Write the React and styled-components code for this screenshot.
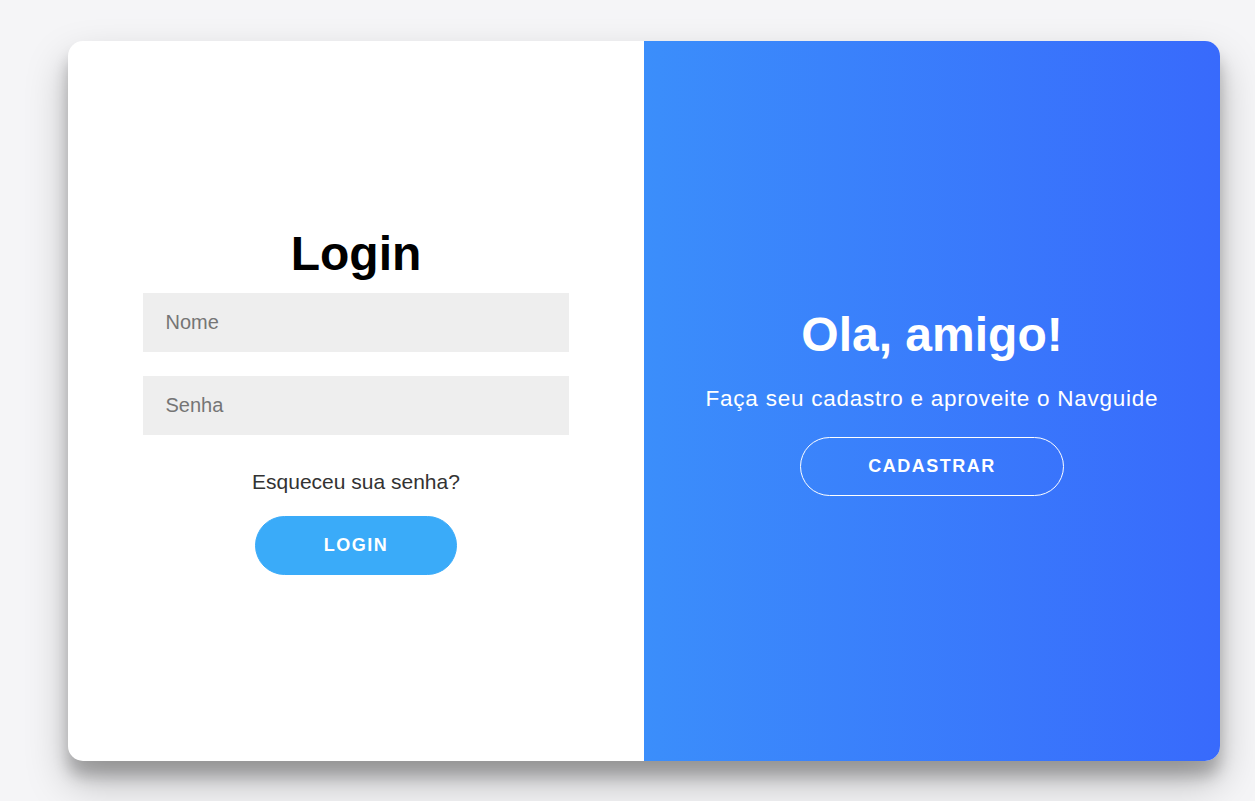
import React from 'react';
import styled, { createGlobalStyle } from 'styled-components';

const Global = createGlobalStyle`
  * { box-sizing: border-box; }
  body {
    margin: 0;
    background: #f5f5f7;
    font-family: "Liberation Sans", Arial, sans-serif;
  }
`

const Page = styled.div`
  min-height: 801px;
  padding: 41px 0 0 68px;
`

const Card = styled.div`
  width: 1152px;
  height: 720px;
  display: flex;
  border-radius: 15px;
  overflow: hidden;
  background: #fff;
  box-shadow: 0 21px 42px rgba(0,0,0,0.25), 0 15px 15px rgba(0,0,0,0.22);
`

const Panel = styled.div`
  flex: 0 0 50%;
  min-width: 0;
  display: flex;
  flex-direction: column;
  align-items: center;
  justify-content: center;
  text-align: center;
  padding: 0 75px 1px;
`

const Overlay = styled(Panel)`
  padding: 0 40px;
  color: #fff;
  background: linear-gradient(to right, #3b8efb, #386afc);
`

const Title = styled.h1`
  margin: 0;
  font-size: 48px;
  font-weight: bold;
  color: ${p => p.light ? '#fff' : '#000'};
`

const Input = styled.input`
  width: 100%;
  height: 59px;
  margin: 12px 0;
  padding: 0 22.5px;
  border: none;
  outline: none;
  background: #eee;
  font-family: "Liberation Sans", Arial, sans-serif;
  font-size: 20px;
  color: #333;
  &::placeholder { color: #757575; }
`

const Forgot = styled.a`
  margin: 22.5px 0;
  font-size: 21px;
  color: #333;
  text-decoration: none;
`

const Text = styled.p`
  margin: 22.5px 0;
  font-size: 22.5px;
  line-height: 30px;
  letter-spacing: 0.75px;
  white-space: nowrap;
`

const Button = styled.button`
  height: 59px;
  padding: 0 67.5px;
  border-radius: 30px;
  border: 1px solid ${p => p.ghost ? '#fff' : '#3aabf9'};
  background: ${p => p.ghost ? 'transparent' : '#3aabf9'};
  color: #fff;
  font-family: "Liberation Sans", Arial, sans-serif;
  font-size: 18px;
  font-weight: bold;
  letter-spacing: 1.5px;
  text-transform: uppercase;
  cursor: pointer;
`

export default function App() {
  return (
    <Page>
      <Global />
      <Card>
        <Panel as="form" onSubmit={e => e.preventDefault()}>
          <Title>Login</Title>
          <Input type="text" placeholder="Nome" />
          <Input type="password" placeholder="Senha" />
          <Forgot href="#">Esqueceu sua senha?</Forgot>
          <Button>Login</Button>
        </Panel>
        <Overlay>
          <Title light>Ola, amigo!</Title>
          <Text>Faça seu cadastro e aproveite o Navguide</Text>
          <Button ghost type="button">Cadastrar</Button>
        </Overlay>
      </Card>
    </Page>
  );
}
